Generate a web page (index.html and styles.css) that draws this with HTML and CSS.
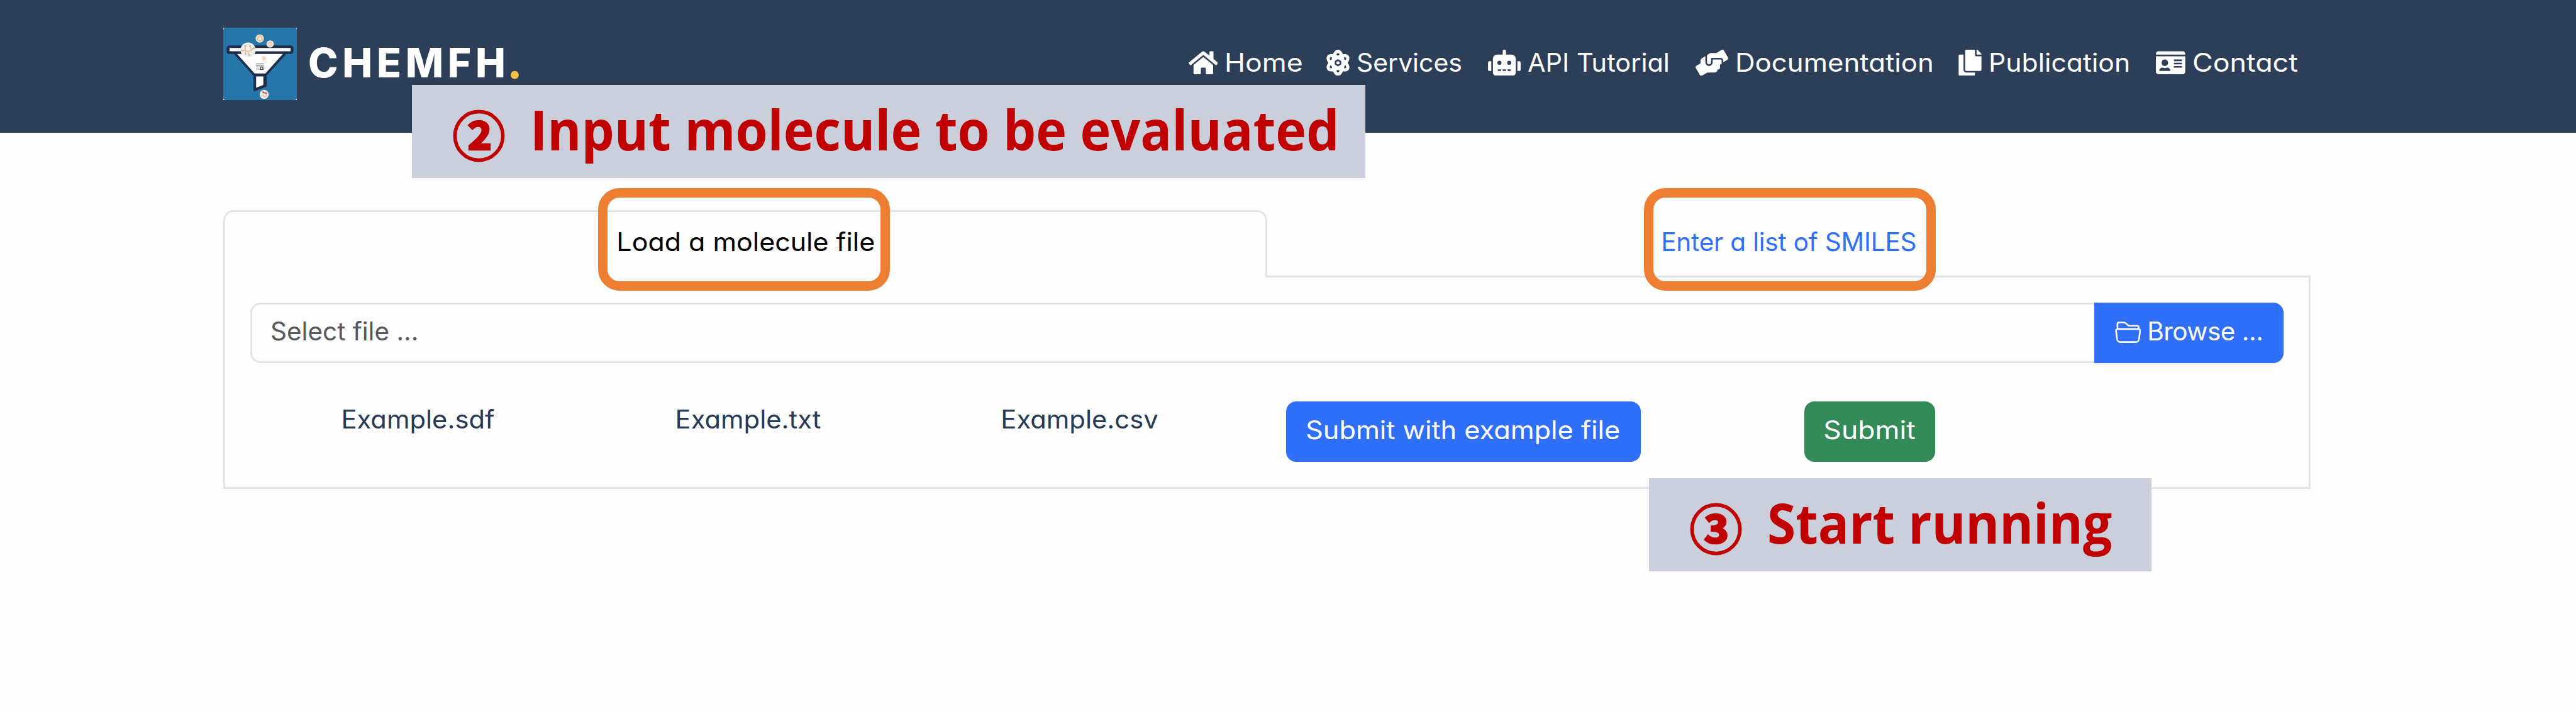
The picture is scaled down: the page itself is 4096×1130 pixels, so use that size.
FILE: index.html
```
<!DOCTYPE html>
<html lang="en">
<head>
<meta charset="utf-8">
<title>ChemFH</title>
<link rel="stylesheet" href="styles.css">
</head>
<body>
<header class="header">
  <a class="brand">
    <svg class="logo" viewBox="20 28 468 462" preserveAspectRatio="none">
      <rect x="20" y="28" width="468" height="462" fill="#fff"/>
      <rect x="20" y="28" width="468" height="462" rx="15" fill="#2776aa"/>
      <path d="M84 190H424L294 334V402L214 434V334Z" fill="#1f2d4a" stroke="#1f2d4a" stroke-width="4" stroke-linejoin="round"/>
      <rect x="41" y="141" width="426" height="55" rx="18" fill="#1f2d4a"/>
      <path d="M60 158H448V179H60Z" fill="#fff"/>
      <path d="M108 196H399L288 320H219Z" fill="#fff"/>
      <path d="M229 339H275V394L229 412Z" fill="#fff"/>
      <circle cx="178" cy="170" r="48" fill="#eceef0"/>
      <path d="M135 174L160 172L178 182L200 170L218 158M178 182L184 204M160 172V146M200 170L190 146M160 172L162 196" fill="none" stroke="#e8bd98" stroke-width="6"/>
      <g fill="#dfa77d"><circle cx="140" cy="174" r="6"/><circle cx="160" cy="146" r="6"/><circle cx="190" cy="146" r="6"/><circle cx="216" cy="159" r="6"/><circle cx="185" cy="203" r="6"/><circle cx="162" cy="196" r="5"/></g>
      <circle cx="252" cy="97" r="26" fill="#f5ede3"/>
      <circle cx="252" cy="97" r="15" fill="none" stroke="#f0bd80" stroke-width="9"/>
      <circle cx="318" cy="132" r="23" fill="#f3ece4"/>
      <path d="M306 128L314 121L328 124L330 136L318 143L307 137Z" fill="none" stroke="#ecc59d" stroke-width="6"/>
      <circle cx="278" cy="225" r="18" fill="#f2ebe3"/>
      <path d="M270 217L279 226L289 221M279 226L278 237" fill="none" stroke="#eccba6" stroke-width="7"/>
      <path d="M228 259H279M228 272H279" stroke="#8f9297" stroke-width="7"/>
      <path d="M229 283H247V298H229Z" fill="#cfcdd6"/>
      <path d="M257 294V280H272V294" fill="none" stroke="#4b4f55" stroke-width="6"/>
      <path d="M252 295H277" stroke="#4b4f55" stroke-width="5"/>
      <circle cx="280" cy="454" r="29" fill="#f4ebe8"/>
      <path d="M262 462H276L286 468L298 460M268 440L284 446L294 442" fill="none" stroke="#e3b7a2" stroke-width="6"/>
      <path d="M271 436L282 447M288 440L297 452" stroke="#c0504d" stroke-width="8"/>
    </svg>
    <span class="brand-name">CHEMFH</span><span class="brand-dot">.</span>
  </a>
  <nav class="nav">
    <a><svg class="ic w-home" viewBox="0 0 576 512"><path d="M280.37 148.26L96 300.11V464a16 16 0 0 0 16 16l112.06-.29a16 16 0 0 0 15.92-16V368a16 16 0 0 1 16-16h64a16 16 0 0 1 16 16v95.64a16 16 0 0 0 16 16.05L464 480a16 16 0 0 0 16-16V300L295.67 148.26a12.19 12.19 0 0 0-15.3 0zM571.6 251.47L488 182.56V44.05a12 12 0 0 0-12-12h-56a12 12 0 0 0-12 12v72.61L318.47 43a48 48 0 0 0-61 0L4.34 251.47a12 12 0 0 0-1.6 16.9l25.5 31A12 12 0 0 0 45.15 301l235.22-193.74a12.19 12.19 0 0 1 15.3 0L530.9 301a12 12 0 0 0 16.9-1.6l25.5-31a12 12 0 0 0-1.7-16.93z"/></svg><span class="t-home">Home</span></a>
    <a><svg class="ic w-atom" viewBox="0 0 448 512"><path d="M413.03 256c40.13-54.89 41.51-98.62 25.14-128-10.84-19.52-40.38-50.23-116.33-38.28C299.82 34.5 264.92 0 224 0s-75.82 34.5-97.84 89.72C50.19 77.8 20.66 108.48 9.82 128c-16.38 29.4-15 73.09 25.14 128-40.13 54.89-41.51 98.62-25.14 128 29.13 52.34 101.6 43.58 116.33 38.28C148.18 477.5 183.11 512 224 512s75.82-34.5 97.84-89.72c14.73 5.3 87.2 14.06 116.33-38.28 16.37-29.38 15-73.09-25.14-128zM63.38 352c-4.03-7.21-.19-24.8 14.95-48.29 6.96 6.53 14.2 12.89 21.87 19.18 1.71 13.71 4 27.08 6.76 40.08-24.56.89-39.89-4.37-43.58-10.97zm36.82-162.88c-7.66 6.29-14.9 12.65-21.87 19.18-15.13-23.5-18.97-41.09-14.95-48.3 3.41-6.14 16.39-11.47 37.92-11.47 1.71 0 3.87.3 5.69.37a472.191 472.191 0 0 0-6.79 40.22zM224 64c9.47 0 22.2 13.52 33.86 37.26-11.19 3.7-22.44 8-33.86 12.86-11.42-4.86-22.67-9.16-33.86-12.86C201.8 77.52 214.53 64 224 64zm0 384c-9.47 0-22.2-13.52-33.86-37.26 11.19-3.7 22.44-8 33.86-12.86 11.42 4.86 22.67 9.16 33.86 12.86C246.2 434.48 233.47 448 224 448zm62.5-157.33c-26.7 19.08-46.14 29.33-62.5 37.48-16.35-8.14-35.8-18.41-62.5-37.48-1.99-27.79-1.99-41.54 0-69.33 26.67-19.05 46.13-29.32 62.5-37.48 16.39 8.17 35.86 18.44 62.5 37.48 1.98 27.78 1.99 41.53 0 69.33zm98.12 61.33c-3.7 6.61-19.03 11.88-43.58 10.97 2.77-13 5.05-26.37 6.76-40.08 7.66-6.29 14.9-12.65 21.87-19.18 15.13 23.49 18.97 41.08 14.95 48.29zM369.67 208.3c-6.96-6.53-14.2-12.89-21.87-19.18-1.71-13.71-4-27.08-6.76-40.08 1.84-.07 4-.37 5.71-.37 21.53 0 34.51 5.33 37.92 11.47 3.99 7.07.15 24.66-15 48.16z"/><circle cx="224" cy="256" r="32"/></svg><span class="t-serv">Services</span></a>
    <a><svg class="ic w-robot" viewBox="0 0 640 512"><path d="M32,224H64V416H32A31.96166,31.96166,0,0,1,0,384V256A31.96166,31.96166,0,0,1,32,224Zm512-48V448a64.06328,64.06328,0,0,1-64,64H160a64.06328,64.06328,0,0,1-64-64V176a79.974,79.974,0,0,1,80-80H288V32a32,32,0,0,1,64,0V96H464A79.974,79.974,0,0,1,544,176ZM264,256a40,40,0,1,0-40,40A39.997,39.997,0,0,0,264,256Zm-8,128H192v32h64Zm96,0H288v32h64ZM456,256a40,40,0,1,0-40,40A39.997,39.997,0,0,0,456,256Zm-8,128H384v32h64ZM640,256V384a31.96166,31.96166,0,0,1-32,32H576V224h32A31.96166,31.96166,0,0,1,640,256Z"/></svg><span class="t-api">API Tutorial</span></a>
    <a><svg class="ic w-hands" viewBox="0 0 640 512"><path d="M488 192H336v56c0 39.7-32.3 72-72 72s-72-32.3-72-72V126.4l-64.9 39C107.8 176.9 96 197.8 96 220.2v47.3l-80 46.2C.7 322.5-4.6 342.1 4.3 357.4l80 138.6c8.8 15.3 28.4 20.5 43.7 11.7L231.4 448H368c35.3 0 64-28.7 64-64h16c17.7 0 32-14.3 32-32v-64h8c13.3 0 24-10.7 24-24v-48c0-13.3-10.7-24-24-24zm147.7-37.4L555.7 16C546.9.7 527.3-4.5 512 4.3L408.6 64H306.4c-12 0-23.7 3.4-33.9 9.7L239 94.6c-9.4 5.8-15 16.1-15 27.1V248c0 22.1 17.9 40 40 40s40-17.9 40-40v-88h184c30.9 0 56 25.1 56 56v28.5l80-46.2c15.3-8.9 20.5-28.4 11.7-43.7z"/></svg><span class="t-doc">Documentation</span></a>
    <a><svg class="ic w-copy" viewBox="0 0 448 512"><path d="M320 448v40c0 13.255-10.745 24-24 24H24c-13.255 0-24-10.745-24-24V120c0-13.255 10.745-24 24-24h72v296c0 30.879 25.121 56 56 56h168zm0-344V0H152c-13.255 0-24 10.745-24 24v368c0 13.255 10.745 24 24 24h272c13.255 0 24-10.745 24-24V128H344c-13.2 0-24-10.8-24-24zm120.971-31.029L375.029 7.029A24 24 0 0 0 358.059 0H352v96h96v-6.059a24 24 0 0 0-7.029-16.97z"/></svg><span class="t-pub">Publication</span></a>
    <a><svg class="ic w-card" viewBox="0 0 576 512"><path d="M528 32H48C21.5 32 0 53.5 0 80v16h576V80c0-26.5-21.5-48-48-48zM0 432c0 26.5 21.5 48 48 48h480c26.5 0 48-21.5 48-48V128H0v304zm352-232c0-4.4 3.6-8 8-8h144c4.4 0 8 3.6 8 8v16c0 4.4-3.6 8-8 8H360c-4.4 0-8-3.6-8-8v-16zm0 64c0-4.4 3.6-8 8-8h144c4.4 0 8 3.6 8 8v16c0 4.4-3.6 8-8 8H360c-4.4 0-8-3.6-8-8v-16zm0 64c0-4.4 3.6-8 8-8h144c4.4 0 8 3.6 8 8v16c0 4.4-3.6 8-8 8H360c-4.4 0-8-3.6-8-8v-16zM176 192c35.3 0 64 28.7 64 64s-28.7 64-64 64-64-28.7-64-64 28.7-64 64-64zM67.1 396.2C75.5 370.5 99.6 352 128 352h8.2c12.3 5.1 25.7 8 39.8 8s27.6-2.9 39.8-8h8.2c28.4 0 52.5 18.5 60.9 44.2 3.2 9.9-5.2 19.8-15.6 19.8H82.7c-10.4 0-18.8-10-15.6-19.8z"/></svg><span class="t-con">Contact</span></a>
  </nav>
</header>

<main class="main">
  <div class="tabs">
    <div class="tab tab-active"><span class="t-load">Load a molecule file</span></div>
    <div class="tab tab-link"><span class="t-enter">Enter a list of SMILES</span></div>
  </div>
  <section class="panel">
    <div class="file-input">
      <div class="file-caption">Select file ...</div>
      <button class="btn btn-browse">
        <svg class="folder" viewBox="0 0 16 16"><path d="M1 3.5A1.5 1.5 0 0 1 2.5 2h2.764c.958 0 1.76.56 2.311 1.184C7.985 3.648 8.48 4 9 4h4.5A1.5 1.5 0 0 1 15 5.5v.64c.57.265.94.876.856 1.546l-.64 5.124A2.5 2.5 0 0 1 12.733 15H3.266a2.5 2.5 0 0 1-2.481-2.19l-.64-5.124A1.5 1.5 0 0 1 1 6.14V3.5zM2 6h12v-.5a.5.5 0 0 0-.5-.5H9c-.964 0-1.71-.629-2.174-1.154C6.374 3.334 5.82 3 5.264 3H2.5a.5.5 0 0 0-.5.5V6zm-.367 1a.5.5 0 0 0-.496.562l.64 5.124A1.5 1.5 0 0 0 3.266 14h9.468a1.5 1.5 0 0 0 1.489-1.314l.64-5.124A.5.5 0 0 0 14.367 7H1.633z"/></svg><span class="t-browse">Browse ...</span>
      </button>
    </div>
    <div class="actions">
      <a class="example">Example.sdf</a>
      <a class="example">Example.txt</a>
      <a class="example">Example.csv</a>
      <button class="btn btn-example"><span class="t-subex">Submit with example file</span></button>
      <button class="btn btn-submit"><span class="t-sub">Submit</span></button>
    </div>
  </section>
</main>

<div class="callout callout-input"><span class="num">②</span><span class="msg">Input molecule to be evaluated</span></div>
<div class="callout callout-run"><span class="num">③</span><span class="msg">Start running</span></div>
<div class="frame frame-load"></div>
<div class="frame frame-enter"></div>
</body>
</html>
```
FILE: styles.css
```
* { box-sizing: border-box; }
body {
  margin: 0;
  height: 1130px;
  position: relative;
  overflow: hidden;
  background: #fefefe;
  font: 400 40.5px/56px Inter, "Open Sans", sans-serif;
  font-feature-settings: "cv11";
  white-space: nowrap;
}
.header {
  height: 211px;
  padding: 0 436px 12px 355px;
  background: #2c3e58;
  color: #fff;
  display: flex;
  align-items: center;
  justify-content: space-between;
}
.brand { display: flex; align-items: center; }
.logo { width: 117px; height: 115px; margin: 4px 18px 0 0; }
.brand-name { font-size: 64px; font-weight: 800; letter-spacing: 6.7px; line-height: 64px; }
.brand-dot { font: 700 84px/64px Lato, sans-serif; color: #f6c144; margin-left: -2px; padding-bottom: 14px; }
.nav {
  display: grid;
  grid-template-columns: 219px 257px 330px 418.5px 314px 232px;
}
.nav a { display: flex; align-items: center; gap: 11px; }
.nav span { transform-origin: 0 50%; }
.ic { height: 41.5px; fill: currentColor; flex: none; }
.w-home, .w-card { width: 46.7px; }
.w-atom, .w-copy { width: 37px; }
.w-robot, .w-hands { width: 52px; }
.t-home { transform: scaleX(1.1); }
.t-serv { transform: scaleX(1.01); }
.t-api { transform: scaleX(1.024); }
.t-doc { transform: scaleX(1.08); }
.t-pub { transform: scaleX(1.055); }
.t-con { transform: scaleX(1.105); }

.main { width: 3319px; margin: 123px 0 0 355px; }
.tabs { display: flex; height: 104px; }
.tab {
  flex: none;
  width: 50%;
  display: flex;
  align-items: center;
  justify-content: center;
  padding-bottom: 3px;
}
.tab-active {
  border: 3px solid #e0e4e8;
  border-bottom: 0;
  border-radius: 16px 16px 0 0;
  color: #000;
  padding: 0 0 6px 3px;
}
.tab-link { color: #2f6ffa; }
.t-load { transform: scaleX(1.06); }
.t-enter { letter-spacing: -.2px; }
.panel {
  height: 339px;
  padding: 43px 40px 0;
  border: 3px solid #e0e4e8;
  border-top: 0;
  background: linear-gradient(#e0e4e8, #e0e4e8) 1654px 0 / 1662px 3px no-repeat;
}
.file-input { display: flex; height: 96px; }
.file-caption {
  flex: 1;
  display: flex;
  align-items: center;
  padding: 0 0 5px 29px;
  border: 3px solid #e0e4e8;
  border-right: 0;
  border-radius: 16px 0 0 16px;
  color: #55585c;
}
.btn {
  border: 0;
  margin: 0;
  height: 96px;
  padding: 0 0 5px;
  border-radius: 16px;
  color: #fff;
  font: inherit;
  font-feature-settings: inherit;
  background: #2f6ffa;
  display: flex;
  align-items: center;
  justify-content: center;
}
.btn-browse { width: 301px; border-radius: 0 16px 16px 0; gap: 10px; }
.t-browse { letter-spacing: -.5px; }
.folder { width: 41.5px; height: 41.5px; fill: currentColor; }
.actions {
  display: grid;
  grid-template-columns: 526px 526px 526px 695px 598px;
  margin: 61px 0 0 3px;
  justify-items: center;
}
.example { color: #263a57; padding-top: 1px; transform: scaleX(1.03); }
.btn-example { width: 564px; }
.t-subex { transform: scaleX(1.068); }
.btn-submit { width: 208px; background: #318a57; }
.t-sub { transform: scaleX(1.1); }

.callout {
  position: absolute;
  height: 148px;
  padding: 0 0 9px 63px;
  display: flex;
  align-items: center;
  background: #cacfdb;
  color: #c00000;
  font: 700 87px/100px "Open Sans", "Noto Sans", sans-serif;
}
.callout-input { left: 655px; top: 135px; width: 1516px; }
.callout-run { left: 2622px; top: 760px; width: 799px; }
.num {
  flex: none;
  width: 125px;
  padding-top: 14px;
  font: 700 84px/100px "Noto Sans CJK SC", sans-serif;
  -webkit-text-stroke: 2.6px #c00000;
  text-indent: 1.5px;
}
.msg { flex: none; transform: scaleX(.949); transform-origin: 0 50%; }
.callout-run .msg { transform: scaleX(.942); }
.frame {
  position: absolute;
  top: 299px;
  height: 163px;
  border: 15.6px solid #ed7d31;
  border-radius: 34px;
}
.frame-load { left: 951px; width: 464px; }
.frame-enter { left: 2614px; width: 464px; }
```
